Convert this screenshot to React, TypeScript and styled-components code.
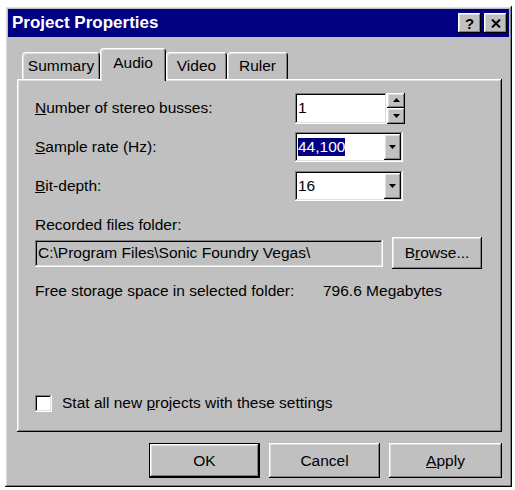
import React from "react";
import styled, { createGlobalStyle } from "styled-components";

const GlobalStyle = createGlobalStyle`
    html, body {
        margin: 0;
        padding: 0;
        background: #ffffff;
    }
    body {
        font-family: "Liberation Sans", Arial, sans-serif;
        font-size: 15.5px;
        color: #000;
    }
`;

const raised = `
    box-shadow: inset -1px -1px #000, inset 1px 1px #fff,
        inset -2px -2px #808080, inset 2px 2px #dfdfdf;
`;

const sunken = `
    box-shadow: inset -1px -1px #fff, inset 1px 1px #808080,
        inset -2px -2px #dfdfdf, inset 2px 2px #000;
`;

const Window = styled.div`
    margin: 6px 0 0 5px;
    width: 507px;
    height: 481px;
    box-sizing: border-box;
    padding: 3px;
    background: #c0c0c0;
    ${raised}
    display: flex;
    flex-direction: column;
`;

const TitleBar = styled.div`
    height: 28px;
    background: #000080;
    display: flex;
    align-items: center;
    padding: 0 2px 0 4px;
`;

const Title = styled.div`
    flex: 1;
    color: #fff;
    font-weight: 700;
    font-size: 17px;
`;

const TitleButton = styled.div`
    width: 23px;
    height: 20px;
    margin-left: 3px;
    background: #c0c0c0;
    ${raised}
    display: flex;
    align-items: center;
    justify-content: center;
    font-weight: 700;
    font-size: 15px;
`;

const Body = styled.div`
    flex: 1;
    display: flex;
    flex-direction: column;
    padding: 11px 7px 0 9px;
`;

const TabStrip = styled.div`
    display: flex;
    align-items: flex-end;
    height: 31px;
    padding-left: 5px;
`;

const Tab = styled.div<{ $active?: boolean; $w: number }>`
    position: relative;
    z-index: ${(p) => (p.$active ? 2 : 0)};
    box-sizing: border-box;
    width: ${(p) => p.$w}px;
    height: ${(p) => (p.$active ? 33 : 27)}px;
    margin-bottom: ${(p) => (p.$active ? -2 : 0)}px;
    padding-bottom: ${(p) => (p.$active ? 4 : 0)}px;
    background: #c0c0c0;
    border-top: 1px solid #fff;
    border-left: 1px solid #fff;
    border-right: 1px solid #000;
    border-radius: 4px 4px 0 0;
    box-shadow: inset 1px 1px #dfdfdf, inset -1px 0 #808080;
    display: flex;
    align-items: center;
    justify-content: center;
`;

const Panel = styled.div`
    position: relative;
    z-index: 1;
    height: 353px;
    box-sizing: border-box;
    padding: 14px 18px 20px 18px;
    background: #c0c0c0;
    ${raised}
    display: flex;
    flex-direction: column;
`;

const Grid = styled.div`
    display: grid;
    grid-template-columns: 260px 110px;
    grid-auto-rows: 30px;
    row-gap: 9px;
    align-items: center;
`;

const Label = styled.span<{ $w?: number }>`
    display: inline-block;
    width: ${(p) => (p.$w ? `${p.$w}px` : "auto")};
    white-space: nowrap;
`;

const Field = styled.div<{ $w: number; $h: number; $bg?: string }>`
    box-sizing: border-box;
    width: ${(p) => p.$w}px;
    height: ${(p) => p.$h}px;
    padding: 0 3px;
    background: ${(p) => p.$bg || "#fff"};
    ${sunken}
    display: flex;
    align-items: center;
    white-space: nowrap;
    overflow: hidden;
`;

const FieldText = styled.span`
    flex: 1;
    overflow: hidden;
`;

const Selected = styled.span`
    background: #000080;
    color: #fff;
    padding: 1px 0;
`;

const Spinner = styled.div`
    display: flex;
    height: 31px;
`;

const SpinCol = styled.div`
    display: flex;
    flex-direction: column;
`;

const SpinButton = styled.div`
    width: 18px;
    flex: 1;
    background: #c0c0c0;
    ${raised}
    display: flex;
    align-items: center;
    justify-content: center;
`;

const DropButton = styled.div`
    width: 17px;
    height: 26px;
    margin-right: -1px;
    background: #c0c0c0;
    ${raised}
    display: flex;
    align-items: center;
    justify-content: center;
    flex-shrink: 0;
`;

const SectionLabel = styled.div`
    margin-top: 15px;
    height: 18px;
    line-height: 18px;
`;

const PathRow = styled.div`
    display: flex;
    align-items: center;
    gap: 9px;
    margin-top: 3px;
`;

const Button = styled.div<{ $w: number; $h: number; $default?: boolean }>`
    box-sizing: border-box;
    width: ${(p) => p.$w}px;
    height: ${(p) => p.$h}px;
    background: #c0c0c0;
    border: ${(p) => (p.$default ? "1px solid #000" : "none")};
    ${raised}
    display: flex;
    align-items: center;
    justify-content: center;
`;

const InfoRow = styled.div`
    margin-top: 13px;
    display: flex;
`;

const Spacer = styled.div`
    flex: 1;
`;

const CheckRow = styled.div`
    display: flex;
    align-items: center;
    gap: 10px;
`;

const CheckBox = styled.div`
    width: 17px;
    height: 17px;
    background: #fff;
    ${sunken}
`;

const ButtonRow = styled.div`
    display: flex;
    justify-content: flex-end;
    gap: 9px;
    margin-top: 11px;
`;

const Arrow = ({ up }: { up?: boolean }) => (
    <svg width="7" height="4" viewBox="0 0 7 4">
        <polygon points={up ? "3.5,0 7,4 0,4" : "0,0 7,0 3.5,4"} fill="#000" />
    </svg>
);

const tabs = [
    { name: "Summary", w: 78 },
    { name: "Audio", w: 66, active: true },
    { name: "Video", w: 61 },
    { name: "Ruler", w: 61 },
];

const App = () => {
    return (
        <>
            <GlobalStyle />
            <Window>
                <TitleBar>
                    <Title>Project Properties</Title>
                    <TitleButton>?</TitleButton>
                    <TitleButton>
                        <svg width="10" height="9" viewBox="0 0 10 9">
                            <path d="M1 0.5 L9 8.5 M9 0.5 L1 8.5" stroke="#000" strokeWidth="2" />
                        </svg>
                    </TitleButton>
                </TitleBar>
                <Body>
                    <TabStrip>
                        {tabs.map((t) => (
                            <Tab key={t.name} $w={t.w} $active={t.active}>
                                {t.name}
                            </Tab>
                        ))}
                    </TabStrip>
                    <Panel>
                        <Grid>
                            <Label>
                                <u>N</u>umber of stereo busses:
                            </Label>
                            <Spinner>
                                <Field $w={92} $h={31}>
                                    <FieldText>1</FieldText>
                                </Field>
                                <SpinCol>
                                    <SpinButton>
                                        <Arrow up />
                                    </SpinButton>
                                    <SpinButton>
                                        <Arrow />
                                    </SpinButton>
                                </SpinCol>
                            </Spinner>

                            <Label>
                                <u>S</u>ample rate (Hz):
                            </Label>
                            <Field $w={108} $h={30}>
                                <FieldText>
                                    <Selected>44,100</Selected>
                                </FieldText>
                                <DropButton>
                                    <Arrow />
                                </DropButton>
                            </Field>

                            <Label>
                                <u>B</u>it-depth:
                            </Label>
                            <Field $w={108} $h={30}>
                                <FieldText>16</FieldText>
                                <DropButton>
                                    <Arrow />
                                </DropButton>
                            </Field>
                        </Grid>

                        <SectionLabel>Recorded files folder:</SectionLabel>
                        <PathRow>
                            <Field $w={348} $h={27} $bg="#c0c0c0">
                                <FieldText>C:\Program Files\Sonic Foundry Vegas\</FieldText>
                            </Field>
                            <Button $w={90} $h={32}>
                                B<u>r</u>owse...
                            </Button>
                        </PathRow>

                        <InfoRow>
                            <Label $w={288}>Free storage space in selected folder:</Label>
                            <Label>796.6 Megabytes</Label>
                        </InfoRow>

                        <Spacer />

                        <CheckRow>
                            <CheckBox />
                            <Label>
                                Stat all new <u>p</u>rojects with these settings
                            </Label>
                        </CheckRow>
                    </Panel>

                    <ButtonRow>
                        <Button $w={111} $h={35} $default>
                            OK
                        </Button>
                        <Button $w={111} $h={35}>
                            Cancel
                        </Button>
                        <Button $w={113} $h={35}>
                            <u>A</u>pply
                        </Button>
                    </ButtonRow>
                </Body>
            </Window>
        </>
    );
};

export default App;
